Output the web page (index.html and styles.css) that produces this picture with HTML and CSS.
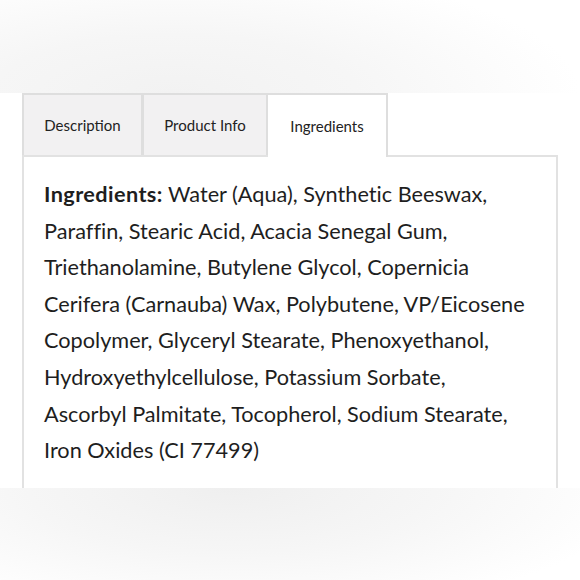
FILE: index.html
```html
<!DOCTYPE html>
<html>
<head>
<meta charset="utf-8">
<link rel="stylesheet" href="styles.css">
</head>
<body>
<div class="band band-top"></div>
<div class="tabs-area">
  <div class="tabs">
    <div class="tab">Description</div>
    <div class="tab">Product Info</div>
    <div class="tab active">Ingredients</div>
  </div>
  <div class="panel">
    <p class="ingredients"><strong>Ingredients:</strong> Water (Aqua), Synthetic Beeswax,<br>Paraffin, Stearic Acid, Acacia Senegal Gum,<br>Triethanolamine, Butylene Glycol, Copernicia<br>Cerifera (Carnauba) Wax, Polybutene, VP/Eicosene<br>Copolymer, Glyceryl Stearate, Phenoxyethanol,<br>Hydroxyethylcellulose, Potassium Sorbate,<br>Ascorbyl Palmitate, Tocopherol, Sodium Stearate,<br>Iron Oxides (CI 77499)</p>
  </div>
</div>
<div class="band band-bottom"></div>
</body>
</html>
```
FILE: styles.css
```css
html, body {
  margin: 0;
  padding: 0;
  background: #ffffff;
}
body {
  width: 580px;
  height: 580px;
  overflow: hidden;
  font-family: Lato, "Noto Sans", sans-serif;
  color: #1e1e1e;
}
.band {
  width: 580px;
}
.band-top {
  height: 93px;
  background: radial-gradient(ellipse 70% 140% at 30% 100%, #f2f2f2 0%, #f6f6f6 45%, #ffffff 100%);
}
.band-bottom {
  height: 92px;
  background: radial-gradient(ellipse 70% 140% at 40% 0%, #efefef 0%, #f6f6f6 50%, #ffffff 100%);
}
.tabs-area {
  padding: 0 22px 0 22px;
  height: 395px;
  display: flex;
  flex-direction: column;
}
.tabs {
  display: flex;
  height: 62px;
}
.tab {
  box-sizing: border-box;
  height: 62px;
  border: 2px solid #dedede;
  border-bottom: none;
  background: #f2f1f2;
  font-size: 15px;
  display: flex;
  align-items: center;
  justify-content: center;
  color: #222;
}
.tab:nth-child(1) { width: 121px; }
.tab:nth-child(2) { width: 125px; border-left-width: 1px; }
.tab:nth-child(3) { width: 120px; border-left: none; }
.tab.active {
  background: #ffffff;
  height: 64px;
  position: relative;
  z-index: 1;
}
.panel {
  box-sizing: border-box;
  flex: 1;
  border: 2px solid #e2e2e2;
  border-bottom: none;
  background: #fff;
  padding: 19px 20px 0 20px;
}
.ingredients {
  margin: 0;
  font-size: 21.7px;
  line-height: 36.6px;
  white-space: nowrap;
  font-variant-ligatures: no-common-ligatures;
}
.ingredients strong {
  font-weight: 700;
  letter-spacing: 0.4px;
}
```
